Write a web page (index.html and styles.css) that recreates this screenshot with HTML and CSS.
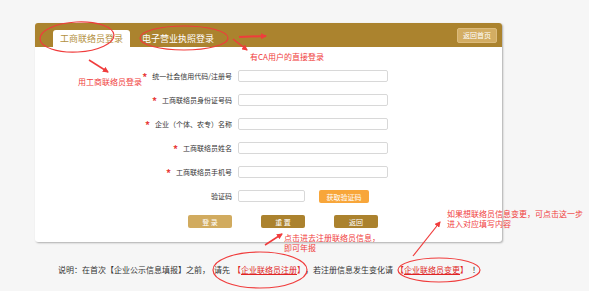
FILE: index.html
```html
<!DOCTYPE html>
<html lang="zh-CN">
<head>
    <meta charset="UTF-8">
    <meta name="viewport" content="width=device-width, initial-scale=1.0">
    <title>工商联络员登录</title>
    <link rel="stylesheet" href="styles.css">
</head>
<body>
    <div class="page">
        <div class="card">
            <div class="card-head">
                <div class="tab active">工商联络员登录</div>
                <div class="tab">电子营业执照登录</div>
                <button class="back-home">返回首页</button>
            </div>
            <div class="form">
                <label class="label"><span class="star">*</span>统一社会信用代码/注册号</label>
                <input class="input" type="text">
                <label class="label"><span class="star">*</span>工商联络员身份证号码</label>
                <input class="input" type="text">
                <label class="label"><span class="star">*</span>企业（个体、农专）名称</label>
                <input class="input" type="text">
                <label class="label"><span class="star">*</span>工商联络员姓名</label>
                <input class="input" type="text">
                <label class="label"><span class="star">*</span>工商联络员手机号</label>
                <input class="input" type="text">
                <label class="label">验证码</label>
                <div class="code-row">
                    <input class="input code" type="text">
                    <button class="code-btn">获取验证码</button>
                </div>
            </div>
            <div class="actions">
                <button class="btn light">登 录</button>
                <button class="btn">重 置</button>
                <button class="btn">返回</button>
            </div>
        </div>

        <p class="note">说明：在首次【企业公示信息填报】之前，<span class="gap">请先</span><span class="hl">【<a href="#">企业联络员注册</a>】</span><span class="gap">，若注册信息发生变化请</span><span class="hl">【<a href="#">企业联络员变更</a>】</span><span class="gap">！</span></p>

        <!-- annotations drawn over the screenshot -->
        <svg class="marks" width="589" height="291" viewBox="0 0 589 291">
            <defs>
                <marker id="head" markerWidth="6" markerHeight="6" refX="5" refY="3" orient="auto" markerUnits="userSpaceOnUse">
                    <path d="M0,0 L6,3 L0,6 Z" fill="#f03c3c"/>
                </marker>
            </defs>
            <g fill="none" stroke="#f03c3c" stroke-width="1.2">
                <ellipse cx="77" cy="37" rx="37" ry="15" transform="rotate(-3 77 37)"/>
                <ellipse cx="184" cy="38" rx="44" ry="12"/>
                <ellipse cx="260" cy="270" rx="47" ry="18"/>
                <ellipse cx="439" cy="270" rx="41" ry="12"/>
                <line x1="239" y1="37" x2="266" y2="36" stroke-width="2" marker-end="url(#head)"/>
                <line x1="233" y1="39" x2="247" y2="50" stroke-width="1.5" marker-end="url(#head)"/>
                <line x1="89" y1="60" x2="108" y2="72" stroke-width="1.5" marker-end="url(#head)"/>
                <line x1="265" y1="245" x2="282" y2="234" stroke-width="1.5" marker-end="url(#head)"/>
                <line x1="413" y1="256" x2="440" y2="222" stroke-width="1.2" marker-end="url(#head)"/>
            </g>
        </svg>
        <div class="tip tip-ca">有CA用户的直接登录</div>
        <div class="tip tip-user">用工商联络员登录</div>
        <div class="tip tip-reg">点击进去注册联络员信息，<br>即可年报</div>
        <div class="tip tip-change">如果想联络员信息变更，可点击这一步<br>进入对应填写内容</div>
    </div>
</body>
</html>
```
FILE: styles.css
```css
body {
    margin: 0;
    background-color: #f6f6f6;
    font-family: "Noto Sans CJK SC", "Noto Sans", sans-serif;
    color: #333;
}
.page {
    position: relative;
    width: 589px;
    height: 291px;
    overflow: hidden;
    padding-top: 23px;
    box-sizing: border-box;
}
.card {
    margin-left: 35px;
    width: 467px;
    height: 219px;
    background-color: #fff;
    border-radius: 3px;
    box-shadow: 1px 1px 2px rgba(0, 0, 0, 0.3);
    overflow: hidden;
}
.card-head {
    height: 24px;
    background-color: #ab832e;
    display: flex;
    align-items: flex-end;
    padding-left: 18px;
    padding-right: 5px;
}
.tab {
    height: 17px;
    line-height: 17px;
    font-size: 9px;
    color: #fff;
    padding: 0 7px;
    margin-right: 5px;
}
.tab.active {
    width: 63px;
    background-color: #fff;
    color: #b38f40;
    border-radius: 3px 3px 0 0;
}
.back-home {
    margin-left: auto;
    align-self: center;
    width: 40px;
    height: 15px;
    padding: 0;
    font-family: inherit;
    font-size: 7px;
    color: #fff;
    background-color: #d3ad63;
    border: 1px solid #dcbb7c;
    border-radius: 2px;
}
.form {
    display: grid;
    grid-template-columns: 197px 150px;
    column-gap: 6px;
    row-gap: 12px;
    margin-top: 23px;
    grid-auto-rows: 12px;
}
.label {
    font-size: 7px;
    line-height: 12px;
    text-align: right;
    color: #333;
    white-space: nowrap;
}
.star {
    color: #e83a3a;
    font-size: 10px;
    font-weight: bold;
    margin-right: 5px;
    vertical-align: -2px;
}
.input {
    box-sizing: border-box;
    width: 150px;
    height: 12px;
    margin: 0;
    border: 1px solid #d8d8d8;
    border-radius: 2px;
    background-color: #fff;
}
.code-row {
    display: flex;
    gap: 14px;
}
.input.code {
    width: 67px;
}
.code-btn {
    width: 50px;
    height: 13px;
    padding: 0;
    font-family: inherit;
    font-size: 7px;
    color: #fff;
    background-color: #f8a63a;
    border: none;
    border-radius: 2px;
}
.actions {
    display: flex;
    gap: 29px;
    margin-top: 13px;
    padding-left: 153px;
}
.btn {
    width: 44px;
    height: 13px;
    padding: 0;
    font-family: inherit;
    font-size: 7px;
    color: #fff;
    background-color: #ab822e;
    border: none;
    border-radius: 2px;
}
.btn.light {
    background-color: #d1ab5f;
}
.note {
    margin: 22px 0 0 58px;
    font-size: 8px;
    line-height: 12px;
    color: #333;
    white-space: nowrap;
}
.gap {
    margin-left: 4px;
}
.hl {
    margin-left: 3px;
    color: #e02424;
}
.hl a {
    color: #e02424;
    text-decoration: underline;
}
.marks {
    position: absolute;
    left: 0;
    top: 0;
    pointer-events: none;
}
.tip {
    position: absolute;
    font-size: 8px;
    line-height: 10px;
    color: #f03c3c;
    white-space: nowrap;
}
.tip-ca {
    left: 250px;
    top: 52px;
}
.tip-user {
    left: 78px;
    top: 77px;
}
.tip-reg {
    left: 284px;
    top: 233px;
}
.tip-change {
    left: 447px;
    top: 209px;
}
```
